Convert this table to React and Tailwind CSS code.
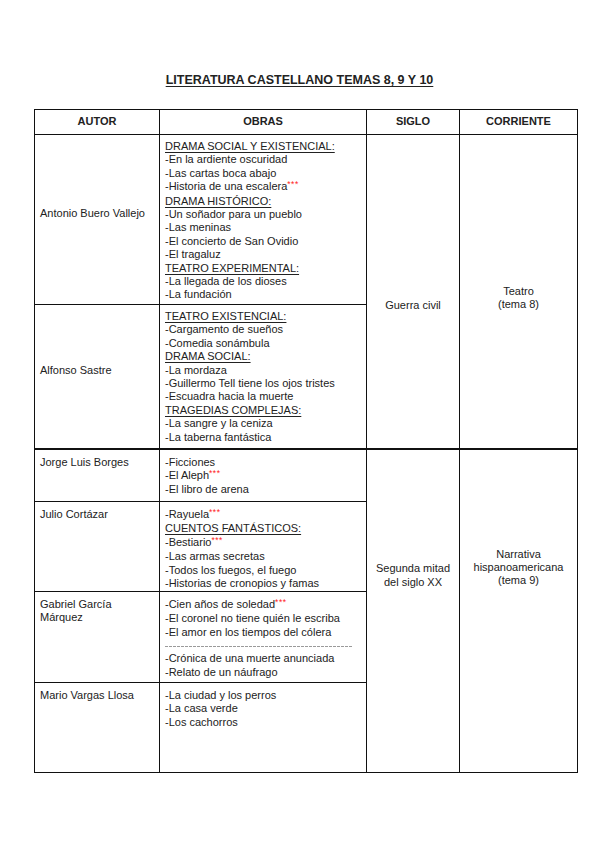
import React from "react";

const Stars = () => (
  <span className="text-[#ff1a1a] text-[8.5px] relative top-[-3px] tracking-[0.5px]">***</span>
);

const H = ({ children }) => <div className="underline underline-offset-[1.5px]">{children}</div>;
const L = ({ children }) => <div>{children}</div>;

const cell = "border border-[#111] px-[5px] align-top";

export default function App() {
  return (
    <div
      className="w-[599px] h-[848px] bg-white text-[#222] pt-[73px]"
      style={{ fontFamily: '"Liberation Sans", Arial, sans-serif' }}
    >
      <h1 className="text-center font-bold text-[12.5px] underline underline-offset-[2px] leading-[14px]">
        LITERATURA CASTELLANO TEMAS 8, 9 Y 10
      </h1>

      <table className="ml-[34px] mt-[22px] w-[543px] table-fixed border-collapse border-[1.5px] border-[#111] text-[11px] leading-[13.4px]">
        <colgroup>
          <col className="w-[125px]" />
          <col className="w-[207px]" />
          <col className="w-[93px]" />
          <col className="w-[118px]" />
        </colgroup>
        <thead>
          <tr className="h-[25px] font-bold">
            <th className={cell + " !align-middle text-center"}>AUTOR</th>
            <th className={cell + " !align-middle text-center"}>OBRAS</th>
            <th className={cell + " !align-middle text-center"}>SIGLO</th>
            <th className={cell + " !align-middle text-center"}>CORRIENTE</th>
          </tr>
        </thead>
        <tbody>
          <tr className="h-[170px]">
            <td className={cell + " !align-middle pb-[12px]"}>Antonio Buero Vallejo</td>
            <td className={cell + " pt-[5px]"}>
              <H>DRAMA SOCIAL Y EXISTENCIAL:</H>
              <L>-En la ardiente oscuridad</L>
              <L>-Las cartas boca abajo</L>
              <L>-Historia de una escalera<Stars /></L>
              <H>DRAMA HISTÓRICO:</H>
              <L>-Un soñador para un pueblo</L>
              <L>-Las meninas</L>
              <L>-El concierto de San Ovidio</L>
              <L>-El tragaluz</L>
              <H>TEATRO EXPERIMENTAL:</H>
              <L>-La llegada de los dioses</L>
              <L>-La fundación</L>
            </td>
            <td rowSpan={2} className={cell + " !align-middle text-center pt-[28px]"}>
              Guerra civil
            </td>
            <td rowSpan={2} className={cell + " !align-middle text-center pt-[14px]"}>
              Teatro
              <br />
              (tema 8)
            </td>
          </tr>
          <tr className="h-[144px]">
            <td className={cell + " !align-middle pb-[12px]"}>Alfonso Sastre</td>
            <td className={cell + " pt-[5px]"}>
              <H>TEATRO EXISTENCIAL:</H>
              <L>-Cargamento de sueños</L>
              <L>-Comedia sonámbula</L>
              <H>DRAMA SOCIAL:</H>
              <L>-La mordaza</L>
              <L>-Guillermo Tell tiene los ojos tristes</L>
              <L>-Escuadra hacia la muerte</L>
              <H>TRAGEDIAS COMPLEJAS:</H>
              <L>-La sangre y la ceniza</L>
              <L>-La taberna fantástica</L>
            </td>
          </tr>
          <tr className="h-[53px] border-t-2 border-[#111]">
            <td className={cell + " pt-[6px]"}>Jorge Luis Borges</td>
            <td className={cell + " pt-[6px]"}>
              <L>-Ficciones</L>
              <L>-El Aleph<Stars /></L>
              <L>-El libro de arena</L>
            </td>
            <td rowSpan={4} className={cell + " !align-middle text-center pb-[70px]"}>
              Segunda mitad
              <br />
              del siglo XX
            </td>
            <td rowSpan={4} className={cell + " !align-middle text-center pb-[86px]"}>
              Narrativa
              <br />
              hispanoamericana
              <br />
              (tema 9)
            </td>
          </tr>
          <tr className="h-[90px]">
            <td className={cell + " pt-[6px]"}>Julio Cortázar</td>
            <td className={cell + " pt-[6px]"}>
              <L>-Rayuela<Stars /></L>
              <H>CUENTOS FANTÁSTICOS:</H>
              <L>-Bestiario<Stars /></L>
              <L>-Las armas secretas</L>
              <L>-Todos los fuegos, el fuego</L>
              <L>-Historias de cronopios y famas</L>
            </td>
          </tr>
          <tr className="h-[91px]">
            <td className={cell + " pt-[6px]"}>
              Gabriel García
              <br />
              Márquez
            </td>
            <td className={cell + " pt-[6px]"}>
              <L>-Cien años de soledad<Stars /></L>
              <L>-El coronel no tiene quién le escriba</L>
              <L>-El amor en los tiempos del cólera</L>
              <div className="h-px mr-[8px] mt-[7px] mb-[5px] bg-[repeating-linear-gradient(90deg,#9a9a9a_0_3px,transparent_3px_4px)]" />
              <L>-Crónica de una muerte anunciada</L>
              <L>-Relato de un náufrago</L>
            </td>
          </tr>
          <tr className="h-[90px]">
            <td className={cell + " pt-[6px]"}>Mario Vargas Llosa</td>
            <td className={cell + " pt-[6px]"}>
              <L>-La ciudad y los perros</L>
              <L>-La casa verde</L>
              <L>-Los cachorros</L>
            </td>
          </tr>
        </tbody>
      </table>
    </div>
  );
}
